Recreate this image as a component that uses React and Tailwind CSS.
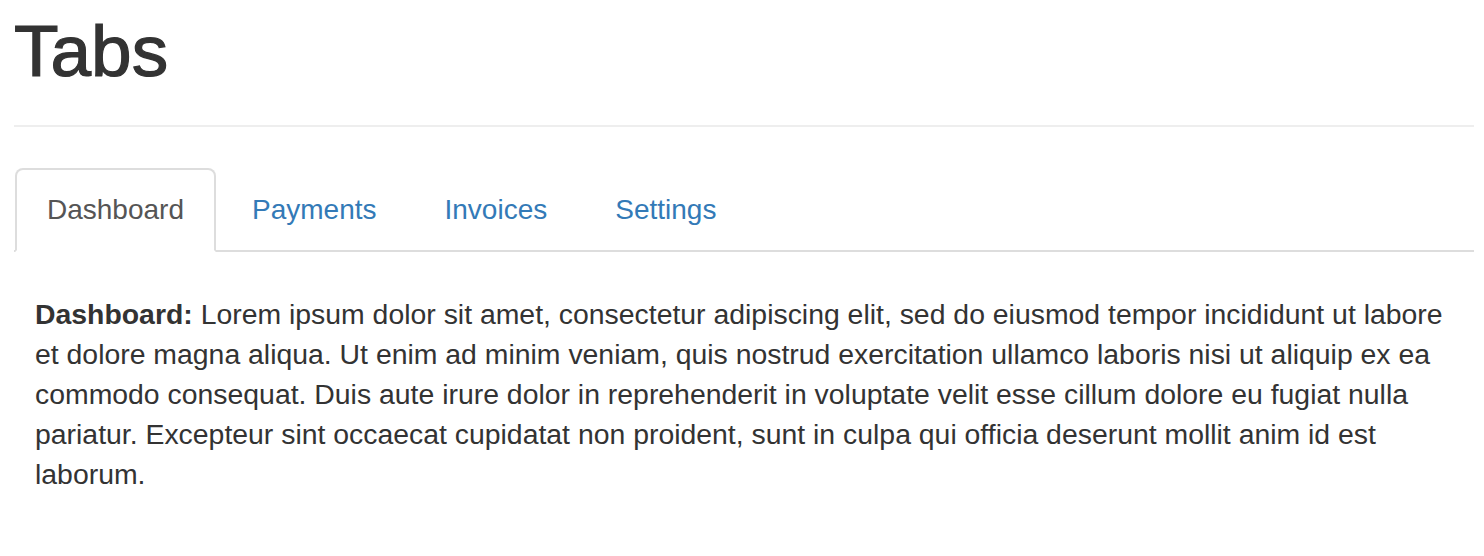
export default function App() {
  const tabs = ["Dashboard", "Payments", "Invoices", "Settings"];
  return (
    <div
      className="w-[1484px] h-[556px] bg-white pl-[14px] pr-[10px] text-[#333]"
      style={{ fontFamily: '"Liberation Sans", Helvetica, Arial, sans-serif' }}
    >
      <div className="pt-[11px] pb-[34px] border-b-2 border-[#eee]">
        <h1 className="text-[73px] leading-[80px] font-normal m-0 [-webkit-text-stroke:1.2px_#333]">Tabs</h1>
      </div>
      <ul className="mt-[41px] flex border-b-2 border-[#ddd] pl-[1px] list-none m-0">
        {tabs.map((t, i) => (
          <li key={t} className="-mb-[2px] mr-[4px]">
            {i === 0 ? (
              <a className="block px-[30px] py-[20px] text-[28px] leading-[40px] text-[#555] bg-white border-2 border-[#ddd] border-b-transparent rounded-t-[8px]">
                {t}
              </a>
            ) : (
              <a className="block px-[30px] py-[20px] text-[28px] leading-[40px] text-[#337ab7] border-2 border-transparent rounded-t-[8px]">
                {t}
              </a>
            )}
          </li>
        ))}
      </ul>
      <div className="pt-[42px] pl-[21px] pr-[20px]">
        <p className="text-[28.4px] leading-[40px] m-0">
          <strong className="font-bold">Dashboard:</strong> Lorem ipsum dolor sit amet, consectetur adipiscing elit, sed do eiusmod tempor incididunt ut labore et dolore magna aliqua. Ut enim ad minim veniam, quis nostrud exercitation ullamco laboris nisi ut aliquip ex ea commodo consequat. Duis aute irure dolor in reprehenderit in voluptate velit esse cillum dolore eu fugiat nulla pariatur. Excepteur sint occaecat cupidatat non proident, sunt in culpa qui officia deserunt mollit anim id est laborum.
        </p>
      </div>
    </div>
  );
}
